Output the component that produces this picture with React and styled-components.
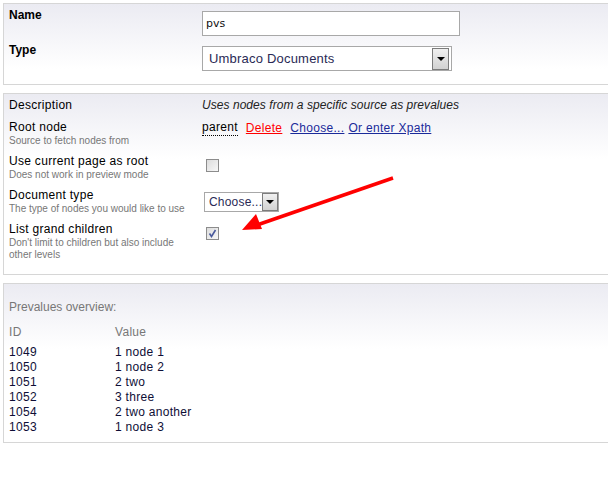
import React from "react";
import styled, { createGlobalStyle } from "styled-components";

const GlobalStyle = createGlobalStyle`
  body {
    margin: 0;
    background: #fff;
    font-family: "Liberation Sans", Arial, sans-serif;
    font-size: 12px;
    color: #000;
  }
`;

const Page = styled.div`
  position: relative;
  padding: 3px 0 0 3px;
  width: 605px;
  overflow: hidden;
`;

const Panel = styled.div`
  border: 1px solid #d6d6d6;
  border-right: none;
  background: linear-gradient(to bottom, #ebebf2 0px, #ffffff 65px);
  padding: ${(p) => p.$pad || "4px 0 13px 5px"};
  margin-bottom: 8px;
`;

const FormGrid = styled.div`
  display: grid;
  grid-template-columns: 193px 1fr;
  row-gap: 7px;
  align-items: start;
`;

const Label = styled.div`
  line-height: 15px;
  font-weight: ${(p) => (p.$bold ? "bold" : "normal")};
  letter-spacing: ${(p) => (p.$bold ? 0 : 0.3)}px;
  color: #000;
`;

const Sub = styled.div`
  font-size: 10px;
  line-height: 12px;
  color: #777;
`;

const Control = styled.div`
  display: flex;
  align-items: center;
  gap: 8px;
  line-height: 15px;
  letter-spacing: 0.3px;
  margin-top: ${(p) => p.$top || 0}px;
  margin-left: ${(p) => p.$left || 0}px;
`;

const TextInput = styled.div`
  box-sizing: border-box;
  width: 258px;
  height: 25px;
  border: 1px solid #a8a8a8;
  background: #fff;
  padding: 0 3px;
  display: flex;
  align-items: center;
  font-family: "DejaVu Sans", Verdana, sans-serif;
  font-size: 11px;
  letter-spacing: 0;
  color: #111;
`;

const Select = styled.div`
  box-sizing: border-box;
  width: ${(p) => p.$w}px;
  height: ${(p) => p.$h}px;
  border: 1px solid #a8a8a8;
  background: #fff;
  display: flex;
  align-items: center;
  justify-content: space-between;
  padding-left: ${(p) => p.$pl}px;
  font-size: ${(p) => p.$fs}px;
  letter-spacing: 0.2px;
  color: #2a2a55;
`;

const DropButton = styled.span`
  box-sizing: border-box;
  width: ${(p) => p.$w}px;
  height: ${(p) => p.$h}px;
  margin-right: ${(p) => p.$mr}px;
  border: 1px solid #7c7c7c;
  background: linear-gradient(to bottom, #f0f0f0, #d2d2d2);
  display: flex;
  align-items: center;
  justify-content: center;

  &::after {
    content: "";
    border-left: 4px solid transparent;
    border-right: 4px solid transparent;
    border-top: 4px solid #000;
  }
`;

const Checkbox = styled.span`
  box-sizing: border-box;
  width: 13px;
  height: 13px;
  border: 1px solid #8c8c8c;
  background: linear-gradient(135deg, #dcdcdc, #f8f8f8);
  display: flex;
  align-items: center;
  justify-content: center;
`;

const Italic = styled.span`
  font-style: italic;
  color: #222;
  letter-spacing: 0.05px;
`;

const Dotted = styled.span`
  border-bottom: 1px dotted #000;
  color: #000;
`;

const Link = styled.a`
  color: ${(p) => (p.$red ? "#ff0000" : "#1a2a9a")};
  text-decoration: underline;
  cursor: pointer;
`;

const Heading = styled.div`
  line-height: 15px;
  color: #777;
  margin-bottom: 10px;
`;

const Table = styled.div`
  display: grid;
  grid-template-columns: 106px 1fr;
  line-height: 15px;
  letter-spacing: 0.3px;
`;

const Th = styled.div`
  color: #777;
  margin-bottom: 5px;
`;

const Td = styled.div`
  color: #0e0e36;
`;

const Arrow = styled.svg`
  position: absolute;
  left: 0;
  top: 0;
  pointer-events: none;
`;

const rows = [
  ["1049", "1 node 1"],
  ["1050", "1 node 2"],
  ["1051", "2 two"],
  ["1052", "3 three"],
  ["1054", "2 two another"],
  ["1053", "1 node 3"],
];

const CheckMark = () => (
  <svg width="9" height="9" viewBox="0 0 9 9">
    <path d="M1.5 4.5 L3.5 7.5 L7.5 1" fill="none" stroke="#4a5a9c" strokeWidth="1.6" />
  </svg>
);

export default function App() {
  return (
    <Page>
      <GlobalStyle />
      <Panel>
        <FormGrid>
          <Label $bold>Name</Label>
          <Control $top={3}>
            <TextInput>pvs</TextInput>
          </Control>
          <Label $bold>Type</Label>
          <Control $top={3}>
            <Select $w={250} $h={25} $pl={6} $fs={13}>
              Umbraco Documents
              <DropButton $w={17} $h={22} $mr={2} />
            </Select>
          </Control>
        </FormGrid>
      </Panel>

      <Panel>
        <FormGrid>
          <Label>Description</Label>
          <Control>
            <Italic>Uses nodes from a specific source as prevalues</Italic>
          </Control>

          <div>
            <Label>Root node</Label>
            <Sub>Source to fetch nodes from</Sub>
          </div>
          <Control>
            <Dotted>parent</Dotted>
            <Link $red>Delete</Link>
            <Link>Choose...</Link>
            <Link style={{ marginLeft: -4 }}>Or enter Xpath</Link>
          </Control>

          <div>
            <Label>Use current page as root</Label>
            <Sub>Does not work in preview mode</Sub>
          </div>
          <Control $top={5} $left={4}>
            <Checkbox />
          </Control>

          <div>
            <Label>Document type</Label>
            <Sub>The type of nodes you would like to use</Sub>
          </div>
          <Control $top={4} $left={2}>
            <Select $w={75} $h={20} $pl={4} $fs={12}>
              Choose...
              <DropButton $w={17} $h={18} $mr={0} />
            </Select>
          </Control>

          <div>
            <Label>List grand children</Label>
            <Sub>
              Don't limit to children but also include
              <br />
              other levels
            </Sub>
          </div>
          <Control $top={5} $left={4}>
            <Checkbox>
              <CheckMark />
            </Checkbox>
          </Control>
        </FormGrid>
      </Panel>

      <Panel $pad="16px 0 7px 5px">
        <Heading>Prevalues overview:</Heading>
        <Table>
          <Th>ID</Th>
          <Th>Value</Th>
          {rows.map(([id, value]) => (
            <React.Fragment key={id}>
              <Td>{id}</Td>
              <Td>{value}</Td>
            </React.Fragment>
          ))}
        </Table>
      </Panel>

      <Arrow width="608" height="481" viewBox="0 0 608 481">
        <line x1="393" y1="178" x2="257" y2="225" stroke="#ff0000" strokeWidth="3.5" />
        <polygon points="242,230 262,229 256,214" fill="#ff0000" />
      </Arrow>
    </Page>
  );
}
